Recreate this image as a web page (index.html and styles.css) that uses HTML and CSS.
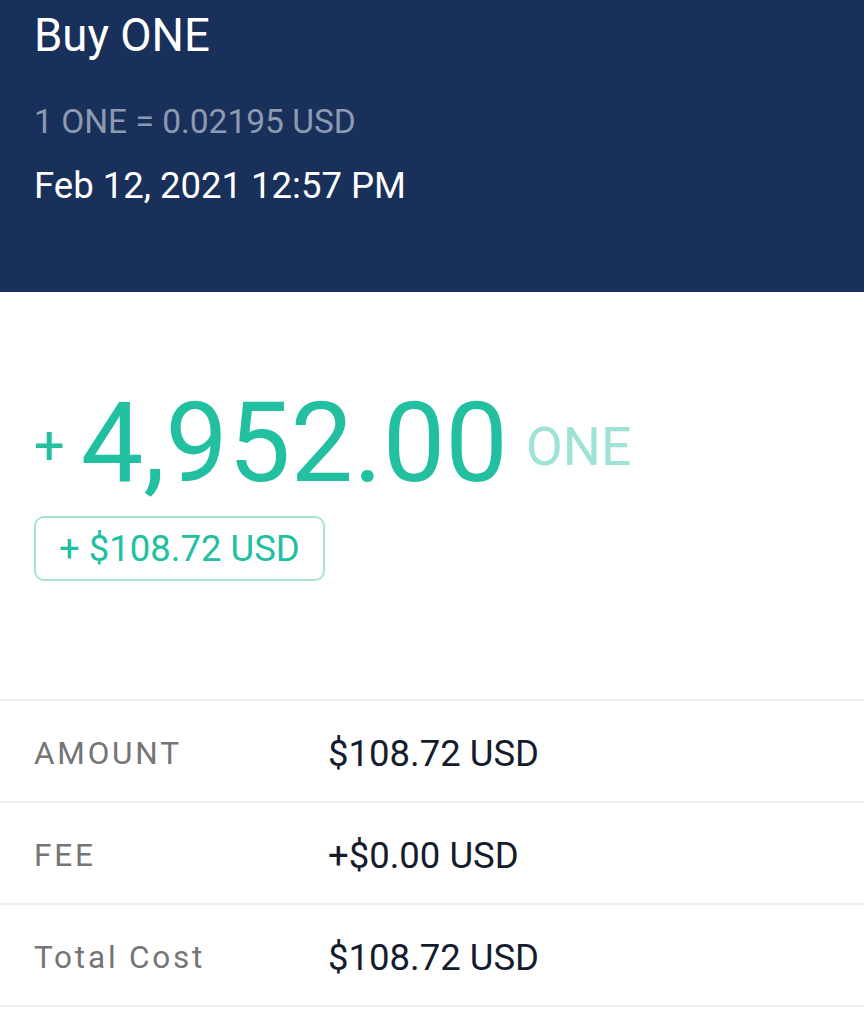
FILE: index.html
```html
<!DOCTYPE html>
<html>
<head>
    <title>Buy ONE</title>
    <meta name='viewport' content='width=device-width, initial-scale=1'/>
    <meta http-equiv="CONTENT-TYPE" content="text/html; charset=UTF-8">
    <link rel="stylesheet" href="styles.css">
</head>
<body>
    <div class="header">
        <h1 class="header-title">Buy ONE</h1>
        <div class="header-rate">1 ONE = 0.02195 USD</div>
        <div class="header-date">Feb 12, 2021 12:57 PM</div>
    </div>

    <div class="summary">
        <div class="summary-amount">
            <span class="summary-sign">+</span>
            <span class="summary-value">4,952.00</span>
            <span class="summary-unit">ONE</span>
        </div>
        <div class="summary-fiat">+ $108.72 USD</div>
    </div>

    <!-- Detail rows -->
    <div class="details">
        <div class="detail-row">
            <div class="detail-label">AMOUNT</div>
            <div class="detail-value">$108.72 USD</div>
        </div>
        <div class="detail-row">
            <div class="detail-label">FEE</div>
            <div class="detail-value">+$0.00 USD</div>
        </div>
        <div class="detail-row">
            <div class="detail-label">Total Cost</div>
            <div class="detail-value">$108.72 USD</div>
        </div>
    </div>
</body>
</html>
```

FILE: styles.css
```css
body {
    font-family: Roboto, 'Noto Sans', sans-serif;
    margin: 0;
    padding: 0;
    background: white;
}

/* Header */
.header {
    background: #18305a;
    height: 292px;
    padding: 9px 34px 0;
    box-sizing: border-box;
}

.header-title {
    margin: 0;
    color: white;
    font-size: 45.5px;
    font-weight: 400;
    line-height: 54px;
}

.header-rate {
    margin-top: 39px;
    color: #8c9ab2;
    font-size: 33.5px;
    line-height: 40px;
}

.header-date {
    margin-top: 24px;
    color: white;
    font-size: 36.5px;
    line-height: 40px;
}

/* Amount summary */
.summary {
    padding: 92px 34px 0;
    height: 407px;
    box-sizing: border-box;
}

.summary-amount {
    display: flex;
    align-items: center;
    color: #22bfa1;
    line-height: 110px;
}

.summary-sign {
    font-size: 54px;
    margin: 6px 16px 0 0;
}

.summary-value {
    font-size: 111.5px;
}

.summary-unit {
    font-size: 53.5px;
    color: #9fe3d6;
    margin: 8px 0 0 18px;
}

.summary-fiat {
    display: inline-block;
    margin-top: 14px;
    padding: 0 23px;
    height: 65px;
    line-height: 62px;
    box-sizing: border-box;
    border: 2px solid #a7e3d7;
    border-radius: 10px;
    color: #22bfa1;
    font-size: 36.5px;
}

/* Detail rows */
.details {
    border-top: 2px solid #efefef;
}

.detail-row {
    display: flex;
    align-items: center;
    height: 102px;
    padding: 4px 0 0 34px;
    border-bottom: 2px solid #efefef;
    box-sizing: border-box;
}

.detail-label {
    width: 294px;
    color: #757575;
    font-size: 31.5px;
    letter-spacing: 2.8px;
}

.detail-value {
    color: #141c2e;
    font-size: 36.5px;
}
```
